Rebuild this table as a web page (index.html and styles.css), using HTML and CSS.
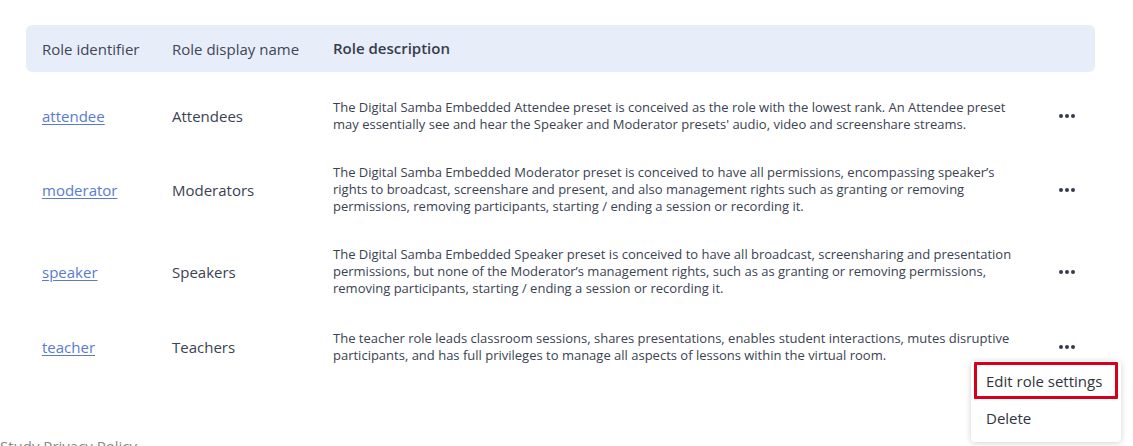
FILE: index.html
```html
<!DOCTYPE html>
<html lang="en">
<head>
<meta charset="utf-8">
<title>Roles</title>
<link rel="stylesheet" href="styles.css">
</head>
<body>
<main class="page">
  <section class="roles">
    <div class="roles-head">
      <div class="col-id">Role identifier</div>
      <div class="col-name">Role display name</div>
      <div class="col-desc head-bold">Role description</div>
      <div class="col-act"></div>
    </div>

    <div class="role-row">
      <div class="col-id"><a href="#" class="role-link">attendee</a></div>
      <div class="col-name">Attendees</div>
      <div class="col-desc">The Digital Samba Embedded Attendee preset is conceived as the role with the lowest rank. An Attendee preset may essentially see and hear the Speaker and Moderator presets' audio, video and screenshare streams.</div>
      <div class="col-act"><button class="dots" aria-label="More"><span></span><span></span><span></span></button></div>
    </div>

    <div class="role-row">
      <div class="col-id"><a href="#" class="role-link">moderator</a></div>
      <div class="col-name">Moderators</div>
      <div class="col-desc">The Digital Samba Embedded Moderator preset is conceived to have all permissions, encompassing speaker’s rights to broadcast, screenshare and present, and also management rights such as granting or removing permissions, removing participants, starting / ending a session or recording it.</div>
      <div class="col-act"><button class="dots" aria-label="More"><span></span><span></span><span></span></button></div>
    </div>

    <div class="role-row">
      <div class="col-id"><a href="#" class="role-link">speaker</a></div>
      <div class="col-name">Speakers</div>
      <div class="col-desc">The Digital Samba Embedded Speaker preset is conceived to have all broadcast, screensharing and presentation permissions, but none of the Moderator’s management rights, such as as granting or removing permissions, removing participants, starting / ending a session or recording it.</div>
      <div class="col-act"><button class="dots" aria-label="More"><span></span><span></span><span></span></button></div>
    </div>

    <div class="role-row row-last">
      <div class="col-id"><a href="#" class="role-link">teacher</a></div>
      <div class="col-name">Teachers</div>
      <div class="col-desc">The teacher role leads classroom sessions, shares presentations, enables student interactions, mutes disruptive participants, and has full privileges to manage all aspects of lessons within the virtual room.</div>
      <div class="col-act">
        <button class="dots" aria-label="More"><span></span><span></span><span></span></button>
        <ul class="menu">
          <li class="menu-item is-highlight">Edit role settings</li>
          <li class="menu-item">Delete</li>
        </ul>
      </div>
    </div>
  </section>
  <footer class="foot">Study Privacy Policy</footer>
</main>
</body>
</html>
```

FILE: styles.css
```css
* { box-sizing: border-box; }
html, body { margin: 0; padding: 0; background: #fff; }
body {
  font-family: "Open Sans", "Noto Sans", sans-serif;
  color: #3b4252;
  overflow: hidden;
  height: 446px;
}
.page { padding: 25px 38px 0 26px; }
.roles { width: 1069px; }
.roles-head, .role-row {
  display: grid;
  grid-template-columns: 130px 161px 700px 1fr;
  align-items: center;
}
.roles-head {
  height: 47px;
  background: #e8eef9;
  border-radius: 6px;
  padding-left: 16px;
  font-size: 15px;
  color: #3f4656;
  margin-bottom: 11px;
}
.head-bold { font-weight: 600; color: #363d4c; }
.role-row {
  padding: 16px 0 15px 16px;
  font-size: 15px;
}
.row-last { padding-top: 18px; }
.col-desc {
  font-size: 13px;
  line-height: 17px;
  padding-right: 8px;
}
.roles-head .col-desc { font-size: 15px; }
.role-link { color: #5a7bd0; text-decoration: underline; text-underline-offset: 2px; }
.col-act { position: relative; display: flex; justify-content: center; padding-left: 6px; }
.dots {
  display: flex; gap: 2px; border: 0; background: none; padding: 4px; cursor: pointer;
}
.dots span { width: 4px; height: 4px; border-radius: 50%; background: #343b4e; }
.menu {
  position: absolute;
  top: 20px;
  left: -62px;
  width: 150px;
  margin: 0;
  padding: 1px 3px 6px;
  list-style: none;
  background: #fff;
  border-radius: 4px;
  box-shadow: 0 1px 6px rgba(0,0,0,0.18);
  z-index: 5;
}
.menu-item {
  font-size: 15px;
  color: #2f3440;
  padding: 6px 10px 4px;
  height: 37px;
  line-height: 22px;
  white-space: nowrap;
  border: 2px solid transparent;
}
.menu-item.is-highlight { border: 3px solid #d6001c; border-radius: 1px; padding: 5px 9px 3px; }
.foot {
  margin: 55px 0 0 -26px;
  font-size: 15px;
  color: #8a8a8a;
  line-height: 24px;
}
```
